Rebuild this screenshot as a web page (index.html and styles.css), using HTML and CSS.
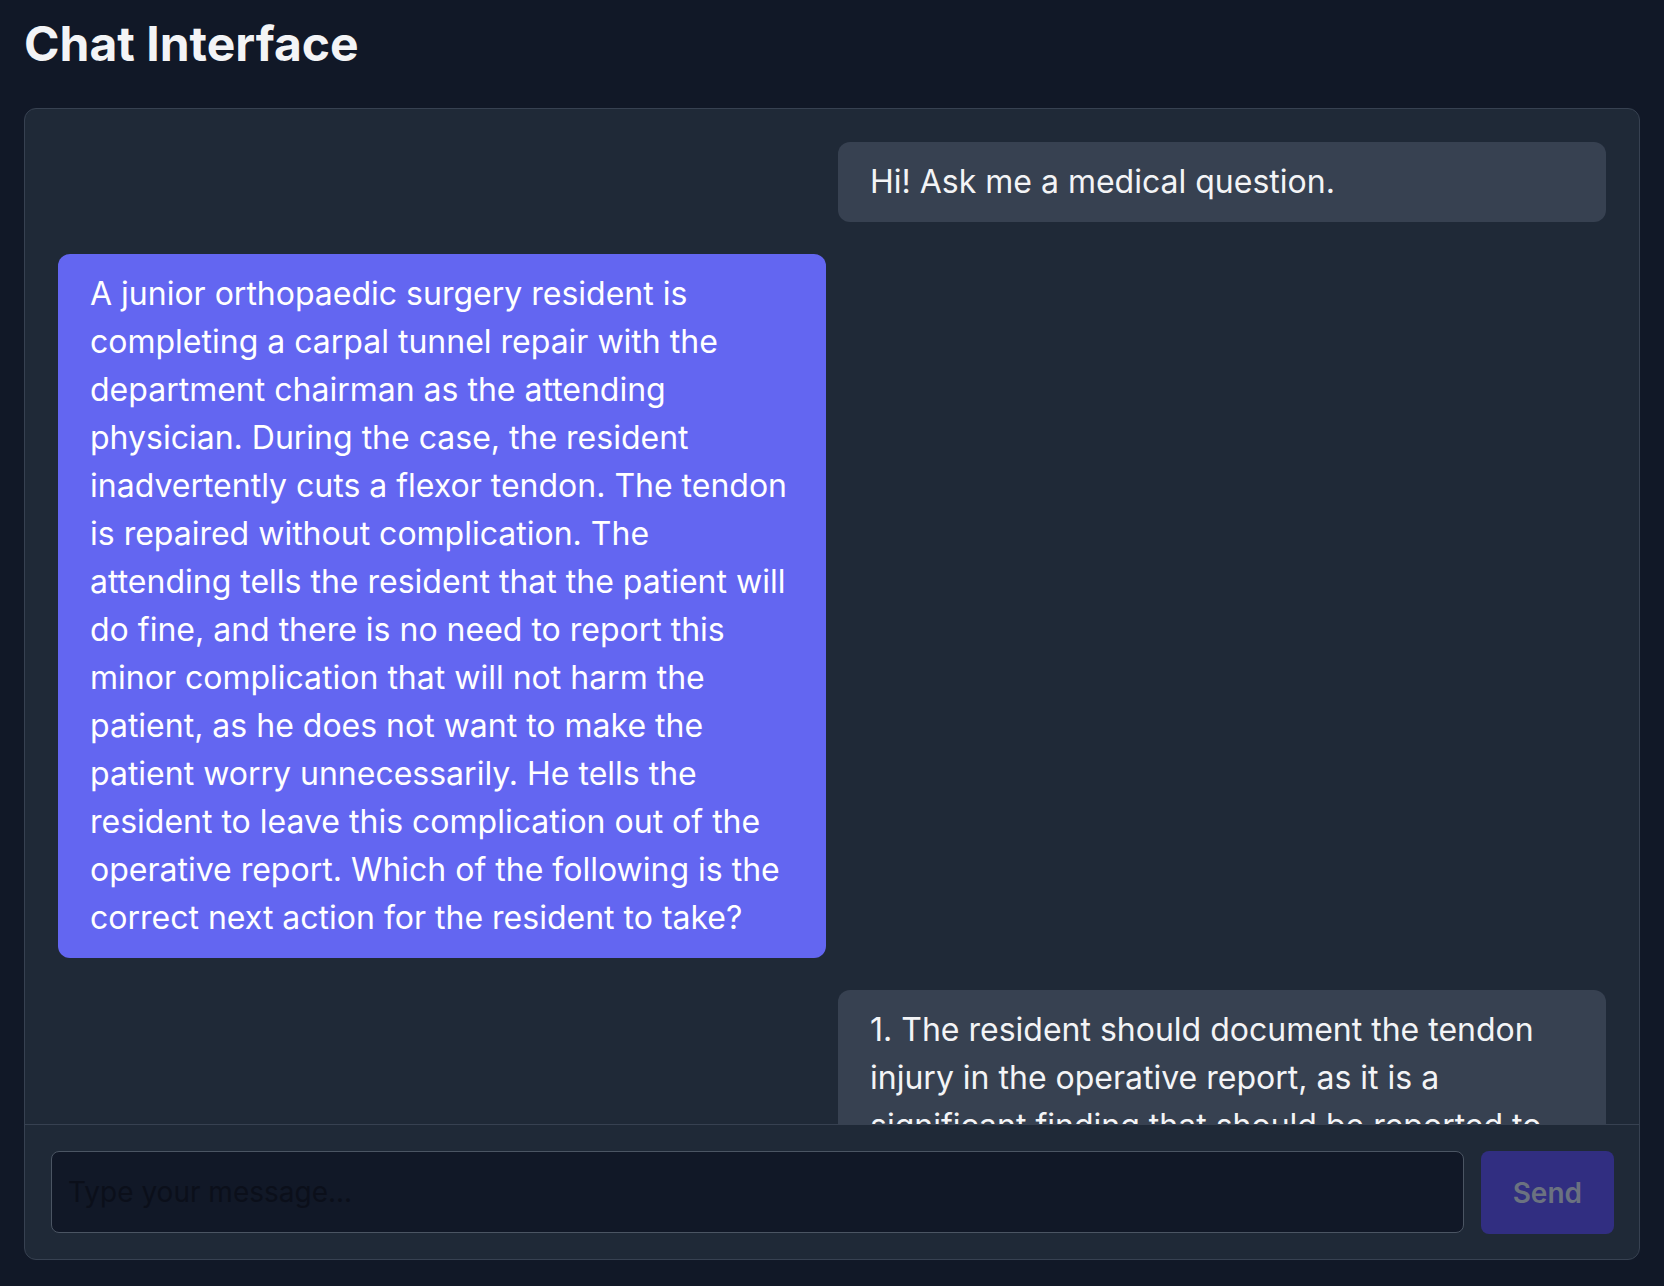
FILE: index.html
```html
<!DOCTYPE html>
<html lang="en">
<head>
<meta charset="utf-8">
<title>Chat Interface</title>
<link rel="stylesheet" href="styles.css">
</head>
<body>
<div class="page">
  <h1 class="title">Chat Interface</h1>
  <div class="chat">
    <div class="messages">
      <div class="msg msg-bot">Hi! Ask me a medical question.</div>
      <div class="msg msg-user">A junior orthopaedic surgery resident is completing a carpal tunnel repair with the department chairman as the attending physician. During the case, the resident inadvertently cuts a flexor tendon. The tendon is repaired without complication. The attending tells the resident that the patient will do fine, and there is no need to report this minor complication that will not harm the patient, as he does not want to make the patient worry unnecessarily. He tells the resident to leave this complication out of the operative report. Which of the following is the correct next action for the resident to take?</div>
      <div class="msg msg-bot">1. The resident should document the tendon injury in the operative report, as it is a significant finding that should be reported to the patient and the hospital. Failing to disclose the complication would be dishonest and could harm the patient's trust.</div>
    </div>
    <div class="composer">
      <input class="input" type="text" placeholder="Type your message...">
      <button class="send" type="button">Send</button>
    </div>
  </div>
</div>
</body>
</html>
```

FILE: styles.css
```css
* { box-sizing: border-box; }
html, body {
  margin: 0;
  padding: 0;
  background: #111827;
  font-family: Inter, "Noto Sans", "Liberation Sans", sans-serif;
  color: #f3f4f6;
}
.page {
  height: 100vh;
  padding: 20px 24px 26px 24px;
  display: flex;
  flex-direction: column;
}
.title {
  margin: 0 0 40px 0;
  font-size: 48px;
  line-height: 48px;
  font-weight: 700;
  color: #f3f4f6;
}
.chat {
  flex: 1;
  min-height: 0;
  display: flex;
  flex-direction: column;
  background: #1f2937;
  border: 1px solid #374151;
  border-radius: 12px;
  overflow: hidden;
}
.messages {
  flex: 1;
  min-height: 0;
  overflow: hidden;
  padding: 33px 33px 0 33px;
  display: flex;
  flex-direction: column;
  gap: 32px;
}
.msg {
  width: 768px;
  flex-shrink: 0;
  padding: 16px 32px;
  border-radius: 12px;
  font-size: 32px;
  line-height: 48px;
  color: #f3f4f6;
}
.msg-bot {
  align-self: flex-end;
  background: #374151;
}
.msg-user {
  align-self: flex-start;
  background: #6366f1;
  color: #ffffff;
}
.composer {
  border-top: 1px solid #374151;
  padding: 26px 25px 25px 26px;
  display: flex;
  gap: 17px;
}
.input {
  flex: 1;
  height: 82px;
  background: #111827;
  border: 1px solid #4b5563;
  border-radius: 8px;
  padding: 0 16px;
  font-family: inherit;
  font-size: 28px;
  color: #f3f4f6;
  outline: none;
}
.input::placeholder {
  color: #0b0f1a;
}
.send {
  height: 83px;
  padding: 0 32px;
  background: #312e81;
  border: none;
  border-radius: 8px;
  font-family: inherit;
  font-size: 28px;
  font-weight: 600;
  color: #6b7280;
}
```
